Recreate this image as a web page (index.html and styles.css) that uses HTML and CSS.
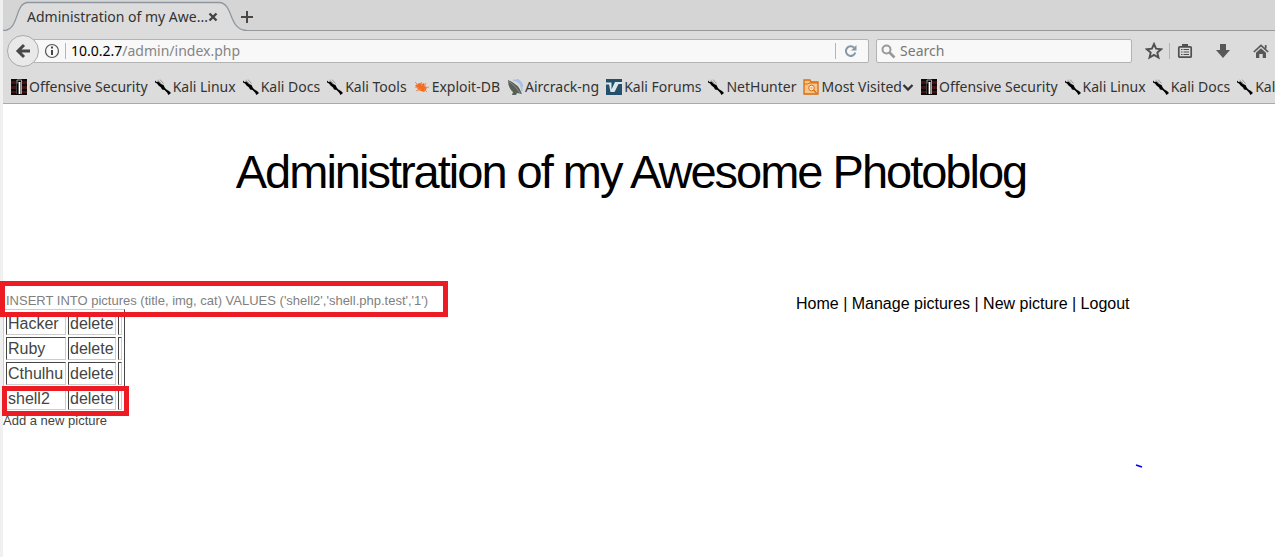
FILE: index.html
```html
<!DOCTYPE html>
<html lang="en">
<head>
<meta charset="utf-8">
<title>Administration of my Awesome Photoblog</title>
<link rel="stylesheet" href="styles.css">
</head>
<body>
<svg class="defs" aria-hidden="true">
  <symbol id="kali" viewBox="0 0 16 16"><path d="M0 1.500L1.500 3 3.500 2.500 6 5l2.500 1L10 9l1.500 1.500L14 12l2 2-2.500 2-1.500-2.500L9.500 11 7 10.500 6 8.500 3.500 6.500 2 4.500 0 3.500z" fill="#000"/><path d="M2.500 1l4 3.500M5 .5l3.500 4" stroke="#888" stroke-width=".8" fill="none"/></symbol>
  <symbol id="offsec" viewBox="0 0 16 16"><path d="M0 0h16v16H0z" fill="#100707"/><path d="M0 2h5v3H0zM0 7h5v3H0zM0 12h5v2H0zM11 2h5v3h-5zM11 7h5v3h-5zM11 12h5v2h-5z" fill="#3f1416"/><path d="M6 15V1h4.500v14" fill="none" stroke="#9aa4a4"/><path d="M7.500 3h2v12h-2z" fill="#fff"/><path d="M6.500 4.500v11" stroke="#000" stroke-width="1.500"/></symbol>
</svg>
<div class="window">
  <header class="browser">
    <div class="tabs">
      <svg class="tab-shape" viewBox="0 0 244 31" aria-hidden="true"><path d="M0 31C17 31 11 3 25 2.500H216C231 3 225 30.500 244 30.500V31z" fill="#dcdcdc"/><path d="M0 30.500C17 30.500 11 3 25 2.500H216C231 3 225 30.500 244 30.500" fill="none" stroke="#8e979f" stroke-width="1.300"/></svg>
      <span class="tab-title">Administration of my Awe...</span>
      <button class="plain close" aria-label="Close tab"><svg width="10" height="10" viewBox="0 0 10 10"><path d="M1.500 1.500l7 7M8.500 1.500l-7 7" stroke="#444" stroke-width="2.400"/></svg></button>
      <button class="plain" aria-label="New tab"><svg width="14" height="14" viewBox="0 0 14 14"><path d="M7 1v12M1 7h12" stroke="#484848" stroke-width="2"/></svg></button>
    </div>
    <div class="toolbar">
      <button class="back" aria-label="Back"><svg width="16" height="16" viewBox="0 0 16 16"><path d="M9 2L3 8l6 6M4 8h11" fill="none" stroke="#474747" stroke-width="3"/></svg></button>
      <div class="address">
        <svg width="16" height="16" viewBox="0 0 16 16" aria-hidden="true"><circle cx="8" cy="8" r="6.500" fill="none" stroke="#555" stroke-width="1.200"/><path d="M8 3.500v2M8 7v5" stroke="#444" stroke-width="2"/></svg>
        <i class="rule"></i>
        <span class="url"><b>10.0.2.7</b>/admin/index.php</span>
        <i class="rule"></i>
        <button class="plain reload" aria-label="Reload"><svg width="14" height="14" viewBox="0 0 14 14"><path d="M11.300 8.500A4.800 4.800 0 1 1 10 3.600" fill="none" stroke="#8796a5" stroke-width="2"/><path d="M12.500 1v5.500H7z" fill="#8796a5"/></svg></button>
      </div>
      <label class="search"><svg width="15" height="15" viewBox="0 0 15 15" aria-hidden="true"><circle cx="5.500" cy="5.500" r="4" fill="none" stroke="#999" stroke-width="2"/><path d="M8.500 8.500l5 5" stroke="#999" stroke-width="2.600"/></svg><input type="text" placeholder="Search" aria-label="Search"></label>
      <div class="actions">
        <button class="plain" aria-label="Bookmark"><svg width="18" height="18" viewBox="0 0 18 18"><path d="M9 2l2.100 4.700 5.100.5-3.900 3.400 1.200 5-4.500-2.700-4.500 2.700 1.200-5-3.900-3.400 5.100-.5z" fill="none" stroke="#505050" stroke-width="1.900"/></svg></button>
        <i class="rule"></i>
        <button class="plain list" aria-label="Show bookmarks"><svg width="16" height="16" viewBox="0 0 16 16"><rect x="1.800" y="3.800" width="12.400" height="10.400" rx="1" fill="none" stroke="#505050" stroke-width="1.700"/><path d="M5 4V1h6v3z" fill="#505050"/><path d="M4 6.500h1.500M6.500 6.500H12M4 9h1.500M6.500 9H12M4 11.500h1.500M6.500 11.500H12" stroke="#505050" stroke-width="1.100"/></svg></button>
        <button class="plain download" aria-label="Downloads"><svg width="16" height="16" viewBox="0 0 16 16"><path d="M5 1h6v6h4l-7 8-7-8h4z" fill="#585858"/></svg></button>
        <button class="plain" aria-label="Home page"><svg width="16" height="16" viewBox="0 0 16 16"><path d="M.8 9L8 2.300 15.200 9M12.700 5.500V2" fill="none" stroke="#585858" stroke-width="1.700"/><path d="M3 9.700l5-4.500 5 4.500V15H9.700v-4H6.300v4H3z" fill="#585858"/></svg></button>
      </div>
    </div>
    <nav class="bookmarks" aria-label="Bookmarks">
      <a href="#"><svg><use href="#offsec"/></svg>Offensive Security</a>
      <a href="#"><svg><use href="#kali"/></svg>Kali Linux</a>
      <a href="#"><svg><use href="#kali"/></svg>Kali Docs</a>
      <a href="#"><svg><use href="#kali"/></svg>Kali Tools</a>
      <a href="#"><svg viewBox="0 0 16 16"><path d="M3 5l3-1 2 1 2-1 1 3 2 1-1 3-2 2-3-1-3-1-1-3-2-1z" fill="#f36c21"/><path d="M1 3l3 3M1 8l4 1M2 12l5-2M7 3l1 4M12 4l-2 4M15 8l-4 1M13 13l-3-3" stroke="#f58a4c"/></svg>Exploit-DB</a>
      <a href="#"><svg viewBox="0 0 16 16"><path d="M6 1q9 1 9 11M9 0q6 2 7 8" fill="none" stroke="#a8bfe8" stroke-width="1.500"/><path d="M1 1q11 4 14 14l-5-1-1 2H5l1-3Q1 9 1 1z" fill="#59605a"/><path d="M1.500 2Q9 7 13 14" fill="none" stroke="#858e82"/></svg>Aircrack-ng</a>
      <a href="#"><svg viewBox="0 0 16 16"><path d="M0 0h16v16H0z" fill="#24506b"/><path d="M0 3.500h5.500v7L9 3h7v2h-3.500L8.500 13H4.500L3 5.500H0z" fill="#dfe6ea"/></svg>Kali Forums</a>
      <a href="#"><svg><use href="#kali"/></svg>NetHunter</a>
      <a href="#"><svg viewBox="0 0 16 16"><path d="M1 1h6l1 2h7v12H1z" fill="#f8c58a" stroke="#d96b0b" stroke-width="1.300"/><path d="M1 5h4l1-1h9" fill="none" stroke="#d96b0b"/><circle cx="8.500" cy="9" r="2.800" fill="#fff0dc" stroke="#d96b0b"/><path d="M10.500 11l3 3M7.500 9h2" stroke="#d96b0b" stroke-width="1.200"/></svg>Most Visited<svg class="chevron" viewBox="0 0 12 16"><path d="M1.500 6L6 10.500 10.500 6" fill="none" stroke="#333" stroke-width="2.300"/></svg></a>
      <a href="#"><svg><use href="#offsec"/></svg>Offensive Security</a>
      <a href="#"><svg><use href="#kali"/></svg>Kali Linux</a>
      <a href="#"><svg><use href="#kali"/></svg>Kali Docs</a>
      <a href="#"><svg><use href="#kali"/></svg>Kali Tools</a>
    </nav>
  </header>
  <main>
    <h1>Administration of my Awesome Photoblog</h1>
    <div class="content">
      <section class="pictures">
        <p class="query">INSERT INTO pictures (title, img, cat) VALUES ('shell2','shell.php.test','1')</p>
        <table>
          <tr><td>Hacker</td><td><a href="#">delete</a></td><td></td></tr>
          <tr><td>Ruby</td><td><a href="#">delete</a></td><td></td></tr>
          <tr><td>Cthulhu</td><td><a href="#">delete</a></td><td></td></tr>
          <tr><td>shell2</td><td><a href="#">delete</a></td><td></td></tr>
        </table>
        <a class="add" href="#">Add a new picture</a>
        <i class="mark mark-query"></i>
        <i class="mark mark-row"></i>
      </section>
      <nav class="menu" aria-label="Admin"><a href="#">Home</a> | <a href="#">Manage pictures</a> | <a href="#">New picture</a> | <a href="#">Logout</a></nav>
    </div>
    <svg class="stroke" viewBox="0 0 8 4" aria-hidden="true"><path d="M1 1l6 2" stroke="#00f" stroke-width="1.800"/></svg>
  </main>
</div>
</body>
</html>
```

FILE: styles.css
```css
* { box-sizing: border-box; }
body { margin: 0; background: #f0f0f0; font-family: "Liberation Sans", Arial, sans-serif; }
a { color: inherit; text-decoration: none; }
svg { display: block; flex: none; }
.defs { position: absolute; width: 0; height: 0; }
.window { min-height: 100vh; margin-left: 3px; background: #fff; }
.browser { background: #dcdcdc; border-bottom: 1px solid #aaa; font: 14px/20px "Noto Sans", sans-serif; color: #333; }
.plain { display: flex; padding: 0; border: 0; background: none; }
.rule { width: 1px; height: 16px; background: #b5b5b5; }

.tabs { position: relative; display: flex; align-items: center; height: 31px; padding: 3px 0 0 24px; background: #d5d5d5; border-bottom: 1px solid #999; }
.tab-shape { position: absolute; left: 0; top: 0; width: 244px; height: 31px; }
.tab-title { position: relative; width: 180px; white-space: nowrap; }
.close { position: relative; margin: 0 22px 0 1px; }

.toolbar { display: flex; align-items: center; height: 40px; padding-left: 4px; }
.back { z-index: 1; display: grid; place-items: center; width: 32px; height: 32px; padding: 0; border: 1px solid #aaa; border-radius: 50%; background: #e9e9e9; }
.address, .search { display: flex; align-items: center; height: 24px; border: 1px solid #b3b3b3; border-radius: 2px; background: #f8f8f8; }
.address { flex: 834 1 0; gap: 5px; margin-left: -6px; padding: 0 10px; }
.url { flex: 1; color: #858585; }
.url b { font-weight: 400; color: #000; }
.reload { margin-left: 3px; }
.search { flex: 256 1 0; gap: 4px; margin-left: 7px; padding-left: 4px; }
.search input { flex: 1; min-width: 0; padding: 0; border: 0; background: none; font: inherit; }
.search input::placeholder { color: #777; opacity: 1; }
.actions { display: flex; align-items: center; margin: 0 6px 0 13px; }
.actions .rule { margin: 0 7px 0 6px; }
.download { margin: 0 22px; }

.bookmarks { display: flex; gap: 7px; height: 32px; padding-left: 8px; overflow: hidden; }
.bookmarks a { display: flex; align-items: center; gap: 2px; white-space: nowrap; }
.bookmarks svg { width: 16px; height: 16px; }
.bookmarks .chevron { width: 12px; margin-left: -2px; }

main { position: relative; }
h1 { margin: 0; padding: 40px 16px 0 0; font-size: 47px; line-height: 55px; font-weight: 400; letter-spacing: -2px; text-align: center; }
.content { display: grid; grid-template-columns: 793fr 479fr; margin-top: 94px; }
.pictures { position: relative; color: #444; font-size: 13px; line-height: 16px; }
.query { margin: 0; padding-left: 3px; color: #808080; }
table { border: 1px solid; border-color: #ccc #444 #444 #ccc; border-spacing: 2px; font-size: 16px; line-height: 19px; }
td { padding: 1px; border: 1px solid; border-color: #444 #ccc #ccc #444; }
td:first-child { min-width: 60px; }
.add { display: block; }
.mark { position: absolute; border: 5px solid #ed1c24; }
.mark-query { left: -3px; top: -12px; width: 448px; height: 36px; }
.mark-row { left: -1px; top: 93px; width: 127px; height: 30px; }
.menu { padding-top: 1px; font-size: 16px; line-height: 19px; color: #000; }
.stroke { position: absolute; left: 89%; top: 360px; width: 8px; height: 4px; }
```
